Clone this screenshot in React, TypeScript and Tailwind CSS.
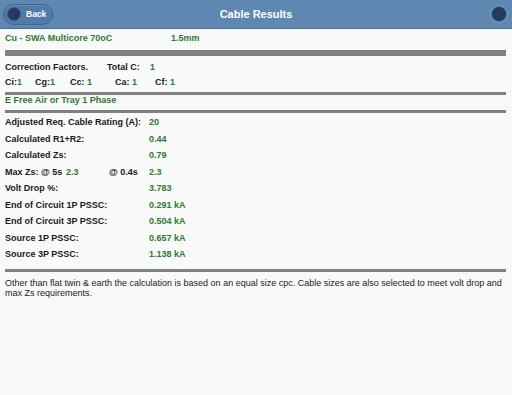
import React from "react";

const G = "text-[#2a7d2a]";

function Row({ label, value }: { label: string; value: string }) {
  return (
    <div className="h-[16.5px] flex items-center">
      <span className="w-[144px] text-[#1a1a1a]">{label}</span>
      <span className={G}>{value}</span>
    </div>
  );
}

export default function App() {
  return (
    <div className="w-[512px] h-[395px] bg-[#f8f9f9] font-['Liberation_Sans',Arial,sans-serif] overflow-hidden">
      <div className="h-[29px] border-b border-[#44709c] bg-[#5e87b1] grid grid-cols-[1fr_auto_1fr] items-center">
        <div className="flex items-center">
          <button className="ml-[3px] h-[21px] w-[50px] rounded-full border border-[#3b6590] bg-[#4e7ba8] flex items-center shadow-[inset_0_1px_0_rgba(255,255,255,0.15)]">
            <span className="ml-[3px] w-[14px] h-[14px] rounded-full bg-[#27395a] border border-[#3a5f88]" />
            <span className="ml-[5px] text-white font-bold text-[8.5px] leading-none">Back</span>
          </button>
        </div>
        <div className="text-white font-bold text-[11px] leading-none">Cable Results</div>
        <div className="flex justify-end">
          <span className="mr-[5px] w-[16px] h-[16px] rounded-full bg-[#263a57] border-[1.5px] border-[#4a74a0] shadow-[0_0_0_1px_#7899bd]" />
        </div>
      </div>

      <div className="pl-[5px] pr-[6px] text-[9px] font-bold leading-none">
        <div className="h-[18px] flex items-center">
          <span className={`w-[166px] ${G}`}>Cu - SWA Multicore 70oC</span>
          <span className={G}>1.5mm</span>
        </div>
        <div className="mt-[3px] h-[6px] bg-[#808080]" />

        <div className="mt-[3px] h-[16px] flex items-center">
          <span className="w-[102px] text-[#1a1a1a]">Correction Factors.</span>
          <span className="w-[43px] text-[#1a1a1a]">Total C:</span>
          <span className={G}>1</span>
        </div>
        <div className="h-[15px] flex items-center text-[#1a1a1a]">
          <span className="w-[30px]">Ci:<span className={G}>1</span></span>
          <span className="w-[35px]">Cg:<span className={G}>1</span></span>
          <span className="w-[45px]">Cc: <span className={G}>1</span></span>
          <span className="w-[40px]">Ca: <span className={G}>1</span></span>
          <span>Cf: <span className={G}>1</span></span>
        </div>
        <div className="mt-[2px] h-[3px] bg-[#808080]" />
        <div className={`h-[10px] flex items-center ${G}`}>E Free Air or Tray 1 Phase</div>
        <div className="mt-[5px] h-[3px] bg-[#808080]" />

        <div className="mt-[1.5px]">
          <Row label="Adjusted Req. Cable Rating (A):" value="20" />
          <Row label="Calculated R1+R2:" value="0.44" />
          <Row label="Calculated Zs:" value="0.79" />
          <div className="h-[16.5px] flex items-center text-[#1a1a1a]">
            <span className="w-[61px]">Max Zs: @ 5s</span>
            <span className={`w-[43px] ${G}`}>2.3</span>
            <span className="w-[40px]">@ 0.4s</span>
            <span className={G}>2.3</span>
          </div>
          <Row label="Volt Drop %:" value="3.783" />
          <Row label="End of Circuit 1P PSSC:" value="0.291 kA" />
          <Row label="End of Circuit 3P PSSC:" value="0.504 kA" />
          <Row label="Source 1P PSSC:" value="0.657 kA" />
          <Row label="Source 3P PSSC:" value="1.138 kA" />
        </div>

        <div className="mt-[6px] h-[3px] bg-[#808080]" />
        <p className="mt-[6px] font-normal text-[9px] leading-[10px] text-[#1a1a1a]">
          Other than flat twin &amp; earth the calculation is based on an equal size cpc. Cable sizes are also selected to meet volt drop and max Zs requirements.
        </p>
      </div>
    </div>
  );
}
